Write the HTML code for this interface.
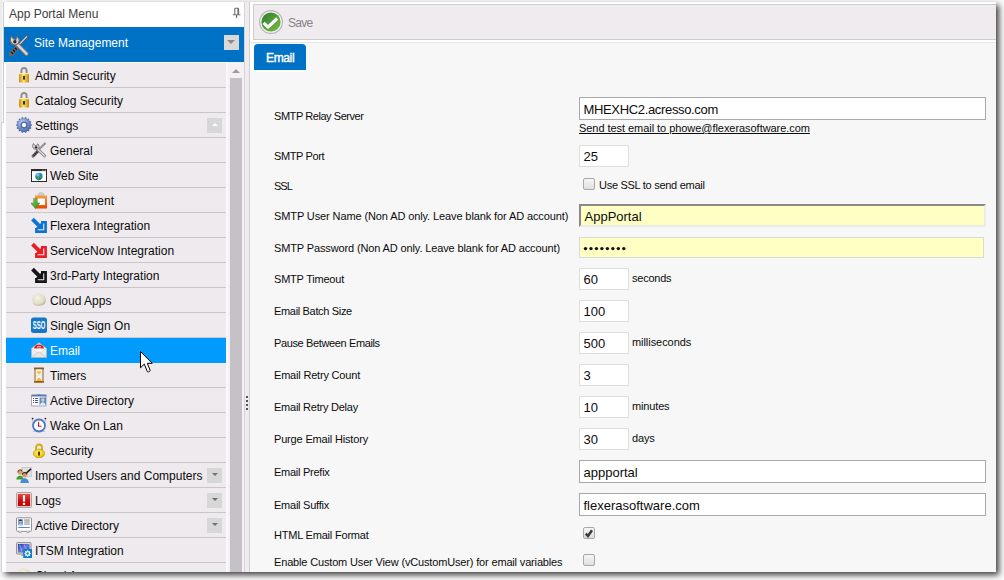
<!DOCTYPE html>
<html><head><meta charset="utf-8">
<style>
*{box-sizing:border-box;margin:0;padding:0}
html,body{width:1004px;height:580px;overflow:hidden;background:#fafafa;font-family:"Liberation Sans",sans-serif}
.abs{position:absolute}
#shadow{position:absolute;left:2px;top:2px;width:994px;height:570px;background:#fff;box-shadow:3px 3px 6px rgba(0,0,0,.75)}
#clip{position:absolute;left:0;top:0;width:996px;height:572px;overflow:hidden}
.row{position:absolute;left:6px;width:220px;height:25px;background:#eeeaee;border-bottom:1px solid #c9c5c9}
.row .tx{position:absolute;top:6px;font-size:12px;line-height:14px;white-space:nowrap;color:#0c0c0c}
.row svg{position:absolute;top:4px}
.l1 .tx{left:29px}.l1 svg{left:10px}
.l2 .tx{left:44px}.l2 svg{left:25px}
.dd{position:absolute;width:15px;height:15px;background:#dcdadc}
.dd:after{content:"";position:absolute;left:3px;top:5px;border-left:4.5px solid transparent;border-right:4.5px solid transparent;border-top:4.5px solid #8a8a8a}
.row .dd{background:#d7d7d7}.row .dd:after{left:4.5px;top:5px;border-left-width:3px;border-right-width:3px;border-top:3px solid #707070}
.row .dd.up:after{border-top:0;border-bottom:3px solid #fff}
.lb{position:absolute;left:274px;font-size:11px;line-height:13px;white-space:nowrap;color:#0c0c0c;letter-spacing:-0.2px}
.in{position:absolute;left:579px;background:#fff;border:1px solid #a9a9a9;font-size:13px;line-height:15px;color:#0c0c0c;padding-left:3.5px;white-space:nowrap}
.sm{width:50px;height:22px;border-color:#dedede}
.unit{position:absolute;left:632px;font-size:11px;line-height:13px;color:#0c0c0c;white-space:nowrap}
.cb{position:absolute;left:583px;width:12px;height:12px;border:1px solid #a8a8a8;border-radius:2px;background:linear-gradient(#f6f6f6,#dedede)}
</style></head><body>
<div id="shadow"></div>
<div id="clip">
<!-- outer window white frame -->
<div class="abs" style="left:2px;top:2px;width:994px;height:570px;background:#fff"></div>
<div class="abs" style="left:0;top:0;width:2px;height:572px;background:#ebebeb"></div><div class="abs" style="left:3px;top:2px;width:1px;height:121px;background:#cdcdcd"></div><div class="abs" style="left:1px;top:122px;width:3px;height:1px;background:#cdcdcd"></div><div class="abs" style="left:1px;top:122px;width:1px;height:450px;background:#d2d2d2"></div><div class="abs" style="left:2px;top:2px;width:1px;height:120px;background:#f6f6f6"></div>
<!-- sidebar header -->
<div class="abs" style="left:9px;top:7px;font-size:12px;line-height:14px;color:#3c3c3c;white-space:nowrap">App Portal Menu</div>
<svg class="abs" style="left:232px;top:7px" width="9" height="12" viewBox="0 0 9 12"><path d="M2.8 7.5V2.2Q2.8 1.3 3.6 1.3H5.6Q6.6 1.3 6.6 2.2V7.5" fill="none" stroke="#6a6a6a" stroke-width="1.1"/><path d="M5.9 2v5.5" stroke="#6a6a6a" stroke-width="1"/><path d="M.8 7.8h7.6M4.6 7.8V11" stroke="#6a6a6a" stroke-width="1.1"/></svg>
<div class="abs" style="left:4px;top:27px;width:240px;height:35px;background:#0072c6"></div>
<div class="abs" style="left:8px;top:34px;width:22px;height:23px"><svg width="22" height="23" viewBox="0 0 16 16" preserveAspectRatio="none"><path d="M13.8 1.6L8.2 7.2" stroke="#5a5a5a" stroke-width="1.9" stroke-linecap="round"/><path d="M13.8 1.6L8.2 7.2" stroke="#e4e4e4" stroke-width=".8"/><path d="M7.5 8.5L2.2 14" stroke="#6a6a6a" stroke-width="3.2" stroke-linecap="round"/><path d="M7.5 8.5L2.2 14" stroke="#1a1a1a" stroke-width="2" stroke-dasharray="1 1"/><path d="M6 6.5L13.5 13.8" stroke="#7a7a7a" stroke-width="3" stroke-linecap="round"/><path d="M6 6.5L13.5 13.8" stroke="#d8d8d8" stroke-width="1.6" stroke-linecap="round"/><path d="M2.5 1.5C1 3.5 1.5 6 3.5 7.2 5 8 6.5 7.5 7.5 6.5 8.5 5 8.2 3 6.6 1.8L5.6 4 4 3.4z" fill="#d4d4d4" stroke="#6a6a6a" stroke-width=".8"/><circle cx="5" cy="5.4" r="1.2" fill="#222"/></svg></div>
<div class="abs" style="left:34px;top:36px;font-size:12px;line-height:14px;color:#fff;white-space:nowrap">Site Management</div>
<div class="dd" style="left:224px;top:35px;background:#d9d9d9"></div>
<div class="abs" style="left:4px;top:62px;width:240px;height:510px;background:#fff"></div>
<div class="row l1" style="top:63px"><svg width="16" height="16" viewBox="0 0 16 16"><defs><linearGradient id="lkg" x1="0" x2="1"><stop offset="0" stop-color="#c89010"/><stop offset=".45" stop-color="#ffe070"/><stop offset="1" stop-color="#c08a10"/></linearGradient></defs><path d="M5.4 7V3.6a2.6 2.6 0 0 1 5.2 0V7" fill="none" stroke="#8e8e8e" stroke-width="1.9"/><rect x="3" y="6" width="10" height="9.6" rx="1.2" fill="url(#lkg)"/><rect x="3" y="6" width="10" height="1.3" fill="#fff3b0" opacity=".8"/><rect x="7.1" y="9" width="1.8" height="3.6" fill="#2a1c00"/></svg><div class="tx" style="">Admin Security</div></div>
<div class="row l1" style="top:88px"><svg width="16" height="16" viewBox="0 0 16 16"><defs><linearGradient id="lkg" x1="0" x2="1"><stop offset="0" stop-color="#c89010"/><stop offset=".45" stop-color="#ffe070"/><stop offset="1" stop-color="#c08a10"/></linearGradient></defs><path d="M5.4 7V3.6a2.6 2.6 0 0 1 5.2 0V7" fill="none" stroke="#8e8e8e" stroke-width="1.9"/><rect x="3" y="6" width="10" height="9.6" rx="1.2" fill="url(#lkg)"/><rect x="3" y="6" width="10" height="1.3" fill="#fff3b0" opacity=".8"/><rect x="7.1" y="9" width="1.8" height="3.6" fill="#2a1c00"/></svg><div class="tx" style="">Catalog Security</div></div>
<div class="row l1" style="top:113px"><svg width="16" height="16" viewBox="0 0 16 16"><defs><radialGradient id="grg" cx=".4" cy=".35" r=".75"><stop offset="0" stop-color="#d0ddf2"/><stop offset=".45" stop-color="#7f9bd0"/><stop offset="1" stop-color="#3d5c9c"/></radialGradient></defs><path d="M15.99 7.55 L15.99 8.45 L14.61 9.12 L14.44 9.85 L15.39 11.06 L15.00 11.87 L13.46 11.88 L13.00 12.46 L13.33 13.97 L12.63 14.52 L11.24 13.86 L10.56 14.19 L10.21 15.69 L9.34 15.89 L8.38 14.69 L7.62 14.69 L6.66 15.89 L5.79 15.69 L5.44 14.19 L4.76 13.86 L3.37 14.52 L2.67 13.97 L3.00 12.46 L2.54 11.88 L1.00 11.87 L0.61 11.06 L1.56 9.85 L1.39 9.12 L0.01 8.45 L0.01 7.55 L1.39 6.88 L1.56 6.15 L0.61 4.94 L1.00 4.13 L2.54 4.12 L3.00 3.54 L2.67 2.03 L3.37 1.48 L4.76 2.14 L5.44 1.81 L5.79 0.31 L6.66 0.11 L7.62 1.31 L8.38 1.31 L9.34 0.11 L10.21 0.31 L10.56 1.81 L11.24 2.14 L12.63 1.48 L13.33 2.03 L13.00 3.54 L13.46 4.12 L15.00 4.13 L15.39 4.94 L14.44 6.15 L14.61 6.88Z" fill="#4e6aa8"/><circle cx="8" cy="8" r="6.9" fill="url(#grg)"/><circle cx="8" cy="8" r="3.5" fill="#4a66a0"/><circle cx="8" cy="8" r="2.2" fill="#f4f4f8"/></svg><div class="tx" style="">Settings</div><div class="dd up" style="left:201px;top:5px"></div></div>
<div class="row l2" style="top:138px"><svg width="16" height="16" viewBox="0 0 16 16"><path d="M13.8 1.6L8.2 7.2" stroke="#5a5a5a" stroke-width="1.9" stroke-linecap="round"/><path d="M13.8 1.6L8.2 7.2" stroke="#e4e4e4" stroke-width=".8"/><path d="M7.5 8.5L2.2 14" stroke="#6a6a6a" stroke-width="3.2" stroke-linecap="round"/><path d="M7.5 8.5L2.2 14" stroke="#1a1a1a" stroke-width="2" stroke-dasharray="1 1"/><path d="M6 6.5L13.5 13.8" stroke="#7a7a7a" stroke-width="3" stroke-linecap="round"/><path d="M6 6.5L13.5 13.8" stroke="#d8d8d8" stroke-width="1.6" stroke-linecap="round"/><path d="M2.5 1.5C1 3.5 1.5 6 3.5 7.2 5 8 6.5 7.5 7.5 6.5 8.5 5 8.2 3 6.6 1.8L5.6 4 4 3.4z" fill="#d4d4d4" stroke="#6a6a6a" stroke-width=".8"/><circle cx="5" cy="5.4" r="1.2" fill="#222"/></svg><div class="tx" style="">General</div></div>
<div class="row l2" style="top:163px"><svg width="16" height="16" viewBox="0 0 16 16"><defs><radialGradient id="glb" cx=".35" cy=".3" r=".8"><stop offset="0" stop-color="#8ad0ff"/><stop offset=".5" stop-color="#2a80d0"/><stop offset="1" stop-color="#1a3a90"/></radialGradient></defs><rect x=".5" y="2.5" width="15" height="12" fill="#fff" stroke="#2a2a2a"/><rect x=".5" y="2.5" width="15" height="1.6" fill="#2a2a2a"/><rect x="11" y="2.8" width=".8" height=".8" fill="#ddd"/><rect x="12.6" y="2.8" width=".8" height=".8" fill="#ddd"/><rect x="14.1" y="2.8" width=".8" height=".8" fill="#ddd"/><circle cx="7.8" cy="9.3" r="3.6" fill="url(#glb)"/><path d="M5 9.5c1-.3 1.5.5 2.3 1.5.5 1 .3 1.8 0 2.3M9 6.3c.8.7 1.5 1.2 2.4 1.3M9 10c1 0 1.7.5 2.2 1" stroke="#30b030" stroke-width="1.4" fill="none"/></svg><div class="tx" style="">Web Site</div></div>
<div class="row l2" style="top:188px"><svg width="16" height="17" viewBox="0 0 16 17"><defs><linearGradient id="dpg" x1="0" y1="0" x2="0" y2="1"><stop offset="0" stop-color="#f8a040"/><stop offset="1" stop-color="#f04000"/></linearGradient><linearGradient id="grn" x1="0" y1="0" x2="1" y2="1"><stop offset="0" stop-color="#90d060"/><stop offset="1" stop-color="#2a8a20"/></linearGradient></defs><path d="M7 2.5c.5-1.5 2-2 3-1.5 1-.5 2.5 0 3 1.5V4H7z" fill="#d0d0d0" stroke="#aaa" stroke-width=".5"/><rect x="4" y="3.5" width="12" height="13" fill="url(#dpg)"/><rect x="6.5" y="6.5" width="7.5" height="6.5" fill="#fff"/><path d="M2.6 6.5h3.4v4.5h3L4.3 16.5-.4 11h3z" fill="url(#grn)" stroke="#3a8a30" stroke-width=".5"/></svg><div class="tx" style="">Deployment</div></div>
<div class="row l2" style="top:213px"><svg width="16" height="16" viewBox="0 0 16 16"><path d="M7 8.8L10.2 12.2 11.8 11.2" fill="#c8c8c8"/><path d="M10 5.2H14.6V14.6H5.4V11" fill="none" stroke="#0a74d0" stroke-width="2.6" stroke-linejoin="miter"/><path d="M1.5 2.2L8 8.7" stroke="#0a74d0" stroke-width="3.8"/><path d="M3.8 12.2H12.2V3.8z" fill="#0a74d0"/></svg><div class="tx" style="">Flexera Integration</div></div>
<div class="row l2" style="top:238px"><svg width="16" height="16" viewBox="0 0 16 16"><path d="M7 8.8L10.2 12.2 11.8 11.2" fill="#c8c8c8"/><path d="M10 5.2H14.6V14.6H5.4V11" fill="none" stroke="#ec1c24" stroke-width="2.6" stroke-linejoin="miter"/><path d="M1.5 2.2L8 8.7" stroke="#ec1c24" stroke-width="3.8"/><path d="M3.8 12.2H12.2V3.8z" fill="#ec1c24"/></svg><div class="tx" style="">ServiceNow Integration</div></div>
<div class="row l2" style="top:263px"><svg width="16" height="16" viewBox="0 0 16 16"><path d="M7 8.8L10.2 12.2 11.8 11.2" fill="#c8c8c8"/><path d="M10 5.2H14.6V14.6H5.4V11" fill="none" stroke="#151515" stroke-width="2.6" stroke-linejoin="miter"/><path d="M1.5 2.2L8 8.7" stroke="#151515" stroke-width="3.8"/><path d="M3.8 12.2H12.2V3.8z" fill="#151515"/></svg><div class="tx" style="">3rd-Party Integration</div></div>
<div class="row l2" style="top:288px"><svg width="16" height="16" viewBox="0 0 16 16"><defs><radialGradient id="cld" cx=".4" cy=".35" r=".7"><stop offset="0" stop-color="#f4f2e6"/><stop offset=".7" stop-color="#e0dcc6"/><stop offset="1" stop-color="#b8b098"/></radialGradient></defs><path d="M1.2 8C1 4.5 3 2.3 5.5 2 7.5 1.3 10 1.5 12 2.8c2.2 1.3 3 3.5 2.8 6-.2 2.5-2 4.4-4.5 4.8C8 14.2 5 14 3.2 12.8 1.8 11.8 1.3 10 1.2 8z" fill="url(#cld)"/></svg><div class="tx" style="">Cloud Apps</div></div>
<div class="row l2" style="top:313px"><svg width="16" height="16" viewBox="0 0 16 16"><rect x="0" y=".5" width="16" height="15.5" rx="2.5" fill="#1577c8"/><text x="8" y="12.2" font-size="10.5" font-family="Liberation Sans" font-weight="bold" fill="#fff" text-anchor="middle" textLength="12.6" lengthAdjust="spacingAndGlyphs">SSO</text></svg><div class="tx" style="">Single Sign On</div></div>
<div class="row l2" style="top:338px;background:#009bfd;border-bottom-color:#009bfd"><svg width="16" height="16" viewBox="0 0 16 16"><defs><linearGradient id="env" x1="0" y1="0" x2="0" y2="1"><stop offset="0" stop-color="#ffffff"/><stop offset="1" stop-color="#e4e4e4"/></linearGradient></defs><path d="M0.5 6.5L8 .8 15.5 6.5V15.5H.5z" fill="url(#env)" stroke="#c0b4a8" stroke-width=".7"/><path d="M3 6.5a5 4 0 0 1 10 0L8 10z" fill="#d82020"/><path d="M6 4.5h4M7 4.5v3.5M9 4.5v3.5" stroke="#fff" stroke-width=".8" opacity=".7"/><path d="M.5 6.5L8 11.5 15.5 6.5" fill="#fafafa" stroke="#d0c8c0" stroke-width=".6"/><path d="M.5 15.5L8 10 15.5 15.5" fill="none" stroke="#c8c0b8" stroke-width=".7"/></svg><div class="tx" style="color:#fff">Email</div></div>
<div class="row l2" style="top:363px"><svg width="16" height="16" viewBox="0 0 16 16"><rect x="3" y=".6" width="10" height="1.8" rx=".5" fill="#8a5a24"/><rect x="3" y="14" width="10" height="1.8" rx=".5" fill="#8a5a24"/><rect x="3.4" y="2" width="1.2" height="12.5" fill="#a87a40"/><rect x="11.4" y="2" width="1.2" height="12.5" fill="#a87a40"/><path d="M5 2.5h6c0 3-2 4-3 5.5-1-1.5-3-2.5-3-5.5z" fill="#fcfaf0"/><path d="M5.6 4.2h4.8c-.4 1.5-1.4 2.3-2.4 3.3-1-1-2-1.8-2.4-3.3z" fill="#f8c020"/><path d="M5 14c0-3 2-4 3-5.5 1 1.5 3 2.5 3 5.5z" fill="#fcfaf0"/><path d="M5.3 14c.2-1.8 1.5-2.6 2.7-3.6 1.2 1 2.5 1.8 2.7 3.6z" fill="#f8b818"/></svg><div class="tx" style="">Timers</div></div>
<div class="row l2" style="top:388px"><svg width="16" height="16" viewBox="0 0 16 16"><path d="M.5 3.5h5l1 -1h3l1 1h4.5v10.5H.5z" fill="#fbfbfb" stroke="#8a98b0" stroke-width=".8"/><rect x=".5" y="2.5" width="15" height="2" fill="#5a7ab0"/><rect x="2" y="6" width="1" height="1" fill="#556"/><rect x="4" y="6" width="3" height="1" fill="#556"/><rect x="2" y="8" width="1" height="1" fill="#556"/><rect x="4" y="8" width="3" height="1" fill="#556"/><rect x="2" y="10" width="1" height="1" fill="#556"/><rect x="4" y="10" width="3" height="1" fill="#556"/><rect x="8.5" y="5.5" width="6.5" height="7.5" fill="#4a90d8"/><circle cx="11.8" cy="8" r="1.7" fill="#f4c8a0"/><path d="M9 13c.5-2 1.5-2.8 2.8-2.8s2.3.8 2.8 2.8z" fill="#e8e8f0"/></svg><div class="tx" style="">Active Directory</div></div>
<div class="row l2" style="top:413px"><svg width="16" height="16" viewBox="0 0 16 16"><circle cx="8" cy="8.5" r="6" fill="#fff" stroke="#4a78c8" stroke-width="1.8"/><path d="M7.6 4.8v4.4h3" stroke="#e01818" stroke-width="1.1" fill="none"/><path d="M7 8.5h1" stroke="#222" stroke-width="1"/><circle cx="1.6" cy="1.6" r=".9" fill="#222"/><circle cx="14.4" cy="1.6" r=".9" fill="#222"/><path d="M1.3 4.5V3M14.7 4.5V3" stroke="#999" stroke-width=".6"/><path d="M2.5 15l1-1M13.5 15l-1-1" stroke="#888" stroke-width=".8"/></svg><div class="tx" style="">Wake On Lan</div></div>
<div class="row l2" style="top:438px"><svg width="16" height="16" viewBox="0 0 16 16"><defs><radialGradient id="lk2" cx=".45" cy=".4" r=".7"><stop offset="0" stop-color="#fff080"/><stop offset=".6" stop-color="#f0d010"/><stop offset="1" stop-color="#c09a00"/></radialGradient></defs><path d="M5 8.5V5.5a3 3 0 0 1 6 0v3" fill="none" stroke="#d0aa10" stroke-width="1.8"/><ellipse cx="8" cy="11.5" rx="5.6" ry="4.4" fill="url(#lk2)" stroke="#b89000" stroke-width=".6"/><path d="M7.3 10.5h1.4l.3 3h-2z" fill="#3a2c00"/><circle cx="8" cy="10.6" r="1" fill="#3a2c00"/></svg><div class="tx" style="">Security</div></div>
<div class="row l1" style="top:463px"><svg width="16" height="16" viewBox="0 0 16 16"><rect x="6" y=".5" width="9.5" height="9" fill="#e0e0e0" stroke="#b8b8b8" stroke-width=".6"/><path d="M8 8.2L15 1.8" stroke="#222" stroke-width="1.6"/><circle cx="4" cy="5.6" r="2.2" fill="#d8a070"/><path d="M1.8 5.5a2.3 2.5 0 0 1 4.5-.8" stroke="#7a4020" stroke-width="1.1" fill="none"/><path d="M0.3 12.5C.5 10 2 8.8 4 8.8s3.2 1.2 3.5 3.7z" fill="#3aa030"/><circle cx="8.6" cy="8" r="2.4" fill="#d89868"/><path d="M6.3 7.5a2.4 2.5 0 0 1 4.7 0" stroke="#3a2a1a" stroke-width="1.1" fill="none"/><path d="M4.3 16c.2-3 2-4.8 4.3-4.8s4.1 1.8 4.3 4.8z" fill="#4a88d8"/></svg><div class="tx" style="">Imported Users and Computers</div><div class="dd" style="left:201px;top:5px"></div></div>
<div class="row l1" style="top:488px"><svg width="16" height="16" viewBox="0 0 16 16"><defs><linearGradient id="lgr" x1="0" y1="0" x2="0" y2="1"><stop offset="0" stop-color="#e84848"/><stop offset=".5" stop-color="#d01010"/><stop offset="1" stop-color="#c00000"/></linearGradient></defs><rect x=".5" y=".5" width="15" height="15" rx="1.2" fill="#f4f4f4" stroke="#9a9a9a" stroke-width=".9"/><rect x="1.8" y="1.8" width="12.4" height="12.4" fill="url(#lgr)"/><rect x="6.9" y="3.2" width="2.2" height="6.3" fill="#fff"/><rect x="6.9" y="10.8" width="2.2" height="2.2" fill="#fff"/></svg><div class="tx" style="">Logs</div><div class="dd" style="left:201px;top:5px"></div></div>
<div class="row l1" style="top:513px"><svg width="16" height="16" viewBox="0 0 16 16"><rect x=".5" y=".8" width="15" height="13.5" rx="1" fill="#fdfdfd" stroke="#8a8a8a" stroke-width=".9"/><rect x="2.2" y="2.2" width="4.6" height="6" fill="#5a88d0"/><circle cx="4.5" cy="4.3" r="1.4" fill="#e8b888"/><path d="M3.1 4a1.4 1.3 0 0 1 2.8 0" fill="#222"/><path d="M2.6 8.2c.3-1.5 1-2 1.9-2s1.6.5 1.9 2z" fill="#a8c8f0"/><rect x="8.2" y="2.6" width="5.6" height=".9" fill="#666"/><rect x="8.2" y="4.6" width="5.6" height=".9" fill="#777"/><rect x="8.2" y="6.6" width="5.6" height=".9" fill="#777"/><rect x="2.2" y="10" width="11.6" height=".9" fill="#4a7ac8"/><path d="M3 14.3v1.2h2v-1.2M11 14.3v1.2h2v-1.2" stroke="#8a8a8a" stroke-width=".7" fill="#fff"/></svg><div class="tx" style="">Active Directory</div><div class="dd" style="left:201px;top:5px"></div></div>
<div class="row l1" style="top:538px"><svg width="16" height="16" viewBox="0 0 16 16"><defs><linearGradient id="scr" x1="0" y1="0" x2="1" y2="1"><stop offset="0" stop-color="#2030a0"/><stop offset=".5" stop-color="#6a78e0"/><stop offset="1" stop-color="#2838b8"/></linearGradient></defs><rect x=".5" y=".5" width="14.5" height="11.5" rx="1" fill="#d8d8d8" stroke="#8a8a8a" stroke-width=".9"/><rect x="2" y="2" width="11.5" height="8.5" fill="url(#scr)"/><path d="M3.5 2.5l2.5 7M8 2.5l3 6" stroke="#a8b0f8" stroke-width="1.2" opacity=".7"/><rect x="5" y="12.5" width="3" height="1.2" fill="#999"/><rect x="7.2" y="7" width="8.8" height="9" fill="#1080c8"/><path d="M14.88 11.18 L14.88 11.82 L13.90 12.20 L13.72 12.63 L14.15 13.59 L13.69 14.05 L12.73 13.62 L12.30 13.80 L11.92 14.78 L11.28 14.78 L10.90 13.80 L10.47 13.62 L9.51 14.05 L9.05 13.59 L9.48 12.63 L9.30 12.20 L8.32 11.82 L8.32 11.18 L9.30 10.80 L9.48 10.37 L9.05 9.41 L9.51 8.95 L10.47 9.38 L10.90 9.20 L11.28 8.22 L11.92 8.22 L12.30 9.20 L12.73 9.38 L13.69 8.95 L14.15 9.41 L13.72 10.37 L13.90 10.80Z" fill="#fff"/><circle cx="11.6" cy="11.5" r="1.2" fill="#1080c8"/></svg><div class="tx" style="">ITSM Integration</div></div>
<div class="row l1" style="top:563px"><svg width="16" height="16" viewBox="0 0 16 16"><defs><radialGradient id="cld" cx=".4" cy=".35" r=".7"><stop offset="0" stop-color="#f4f2e6"/><stop offset=".7" stop-color="#e0dcc6"/><stop offset="1" stop-color="#b8b098"/></radialGradient></defs><path d="M1.2 8C1 4.5 3 2.3 5.5 2 7.5 1.3 10 1.5 12 2.8c2.2 1.3 3 3.5 2.8 6-.2 2.5-2 4.4-4.5 4.8C8 14.2 5 14 3.2 12.8 1.8 11.8 1.3 10 1.2 8z" fill="url(#cld)"/></svg><div class="tx" style="">Cloud Apps</div></div>
<!-- scrollbar -->
<div class="abs" style="left:226px;top:62px;width:18px;height:510px;background:#f4f0f4"></div><div class="abs" style="left:226px;top:62px;width:2px;height:510px;background:#faf8fa"></div>
<div class="abs" style="left:232px;top:69px;border-left:4px solid transparent;border-right:4px solid transparent;border-bottom:4px solid #9c9c9c;width:0;height:0"></div>
<div class="abs" style="left:230px;top:78px;width:12px;height:494px;background:#c4c2c6"></div>
<!-- splitter -->
<div class="abs" style="left:244px;top:2px;width:1px;height:570px;background:#d6d4d6"></div>
<div class="abs" style="left:245px;top:2px;width:4px;height:570px;background:#efebef"></div>
<div class="abs" style="left:249px;top:2px;width:1px;height:570px;background:#d0d0d0"></div>
<div class="abs" style="left:246px;top:396px;width:2px;height:2px;background:#555"></div>
<div class="abs" style="left:246px;top:400px;width:2px;height:2px;background:#555"></div>
<div class="abs" style="left:246px;top:404px;width:2px;height:2px;background:#555"></div>
<div class="abs" style="left:246px;top:408px;width:2px;height:2px;background:#555"></div>
<!-- content -->
<div class="abs" style="left:250px;top:2px;width:746px;height:570px;background:#f7f7f7"></div>
<div class="abs" style="left:250px;top:2px;width:746px;height:40px;background:#fff"></div>
<div class="abs" style="left:250px;top:42px;width:746px;height:1px;background:#e6e6e6"></div>
<div class="abs" style="left:250px;top:43px;width:4px;height:29px;background:#fff"></div>
<div class="abs" style="left:253px;top:4px;width:743px;height:36px;background:#efebef;border:1px solid #cdcdcd;border-right:0"></div>
<svg class="abs" style="left:259px;top:10px" width="24" height="24" viewBox="0 0 24 24"><defs><linearGradient id="g1" x1="0" y1="0" x2="1" y2="1"><stop offset="0" stop-color="#2a7a30"/><stop offset="1" stop-color="#7cc040"/></linearGradient></defs><circle cx="12" cy="12" r="11.4" fill="#f0f0f0" stroke="#b4b4b4" stroke-width="1.1"/><circle cx="12" cy="12" r="9.6" fill="url(#g1)"/><path d="M4.6 12.8l4.4 4.3 9.2-8.6" stroke="#fff" stroke-width="3.1" fill="none" stroke-linejoin="round"/></svg>
<div class="abs" style="left:288px;top:16px;font-size:12px;line-height:14px;color:#858585;white-space:nowrap;letter-spacing:-0.7px">Save</div>
<div class="abs" style="left:254px;top:44px;width:52px;height:26px;background:#0072c6;border-radius:4px 4px 0 0"></div>
<div class="abs" style="left:254px;top:70px;width:52px;height:2px;background:#fff"></div>
<div class="abs" style="left:266px;top:51px;font-size:12px;line-height:14px;color:#fff;white-space:nowrap;-webkit-text-stroke:0.4px #fff;letter-spacing:-0.35px">Email</div>
<div class="lb" style="top:110px;letter-spacing:-0.44px">SMTP Relay Server</div>
<div class="in" style="top:97px;width:407px;height:23px;padding-top:4px;letter-spacing:-0.34px">MHEXHC2.acresso.com</div>
<div class="abs" style="left:579px;top:122px;font-size:11px;line-height:13px;color:#0c0c0c;text-decoration:underline;white-space:nowrap;letter-spacing:-0.05px">Send test email to phowe@flexerasoftware.com</div>
<div class="lb" style="top:150px;letter-spacing:-0.38px">SMTP Port</div>
<div class="in sm" style="top:145px;padding-top:3px">25</div>
<div class="lb" style="top:180px;letter-spacing:-1.0px">SSL</div>
<div class="cb" style="top:178px"></div>
<div class="unit" style="left:599px;top:179px;letter-spacing:-0.28px">Use SSL to send email</div>
<div class="lb" style="top:210px;letter-spacing:-0.11px">SMTP User Name (Non AD only. Leave blank for AD account)</div>
<div class="in" style="top:204px;width:407px;height:23px;background:#ffffc4;border-color:#8a8a8a #ececec #ececec #8a8a8a;border-width:2px 2px 2px 2px;padding-left:3.5px;padding-top:2.5px">AppPortal</div>
<div class="lb" style="top:242px;letter-spacing:-0.13px">SMTP Password (Non AD only. Leave blank for AD account)</div>
<div class="in" style="top:237px;width:405px;height:21px;background:#ffffc4;border-color:#dadada;padding:0"><svg width="60" height="20" style="position:absolute;left:0;top:0"><circle cx="5.50" cy="10.6" r="1.7" fill="#111"/><circle cx="10.97" cy="10.6" r="1.7" fill="#111"/><circle cx="16.44" cy="10.6" r="1.7" fill="#111"/><circle cx="21.91" cy="10.6" r="1.7" fill="#111"/><circle cx="27.38" cy="10.6" r="1.7" fill="#111"/><circle cx="32.85" cy="10.6" r="1.7" fill="#111"/><circle cx="38.32" cy="10.6" r="1.7" fill="#111"/><circle cx="43.79" cy="10.6" r="1.7" fill="#111"/></svg></div>
<div class="lb" style="top:273px;letter-spacing:-0.21px">SMTP Timeout</div>
<div class="in sm" style="top:268px;padding-top:3px">60</div>
<div class="unit" style="top:272px;letter-spacing:-0.23px">seconds</div>
<div class="lb" style="top:305px;letter-spacing:-0.33px">Email Batch Size</div>
<div class="in sm" style="top:300px;padding-top:3px">100</div>
<div class="lb" style="top:337px;letter-spacing:-0.37px">Pause Between Emails</div>
<div class="in sm" style="top:332px;padding-top:3px">500</div>
<div class="unit" style="top:336px;letter-spacing:-0.06px">milliseconds</div>
<div class="lb" style="top:369px;letter-spacing:-0.19px">Email Retry Count</div>
<div class="in sm" style="top:364px;padding-top:3px">3</div>
<div class="lb" style="top:401px;letter-spacing:-0.24px">Email Retry Delay</div>
<div class="in sm" style="top:396px;padding-top:3px">10</div>
<div class="unit" style="top:400px;letter-spacing:-0.15px">minutes</div>
<div class="lb" style="top:433px;letter-spacing:-0.17px">Purge Email History</div>
<div class="in sm" style="top:428px;padding-top:3px">30</div>
<div class="unit" style="top:432px;letter-spacing:-0.15px">days</div>
<div class="lb" style="top:466px;letter-spacing:-0.26px">Email Prefix</div>
<div class="in" style="top:460px;width:407px;height:23px;padding-top:4px">appportal</div>
<div class="lb" style="top:499px;letter-spacing:-0.24px">Email Suffix</div>
<div class="in" style="top:493px;width:407px;height:23px;padding-top:4px">flexerasoftware.com</div>
<div class="lb" style="top:529px;letter-spacing:-0.2px">HTML Email Format</div>
<div class="cb" style="top:527px"><svg width="10" height="10" viewBox="0 0 10 10" style="position:absolute;left:0;top:0"><path d="M1.8 5.6L4 8 8 2.3" stroke="#3a3a3a" stroke-width="2.5" fill="none"/></svg></div>
<div class="lb" style="top:556px;letter-spacing:-0.16px">Enable Custom User View (vCustomUser) for email variables</div>
<div class="cb" style="top:554px"></div>
<!-- cursor -->
<svg class="abs" style="left:140px;top:351px" width="14" height="23" viewBox="0 0 14 23"><path d="M.5 .5V16.8L4.3 13.1 7.2 20.3Q7.5 21.2 8.4 20.9L9.7 20.3Q10.4 19.9 10.1 19.1L7.3 12.3H12.2Z" fill="#fff" stroke="#000" stroke-width="1" stroke-linejoin="round"/></svg>
</div>
</body></html>
